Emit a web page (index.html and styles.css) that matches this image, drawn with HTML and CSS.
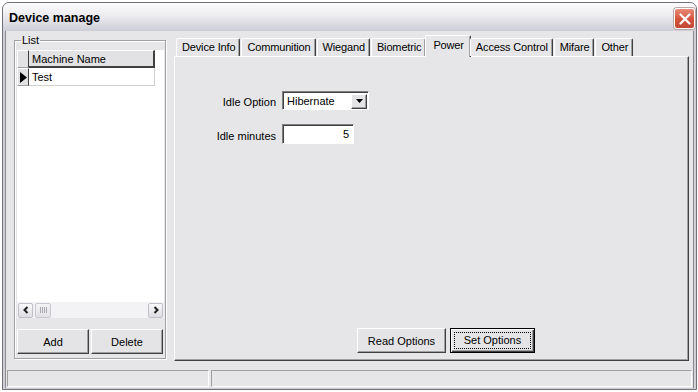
FILE: index.html
```html
<!DOCTYPE html>
<html lang="en">
<head>
    <meta charset="UTF-8">
    <title>Device manage</title>
    <link rel="stylesheet" href="styles.css">
</head>
<body>
    <div class="window">
        <!-- Title bar -->
        <div class="titlebar">
            <span class="title">Device manage</span>
            <span class="close">
                <svg width="12" height="12" viewBox="0 0 12 12">
                    <path d="M1.5 1.5 L10.5 10.5 M10.5 1.5 L1.5 10.5" stroke="#ffffff" stroke-width="2.2" stroke-linecap="round"/>
                </svg>
            </span>
        </div>

        <div class="client">
            <div class="content">
                <!-- Machine list -->
                <fieldset class="group">
                    <legend>List</legend>
                    <div class="grid">
                        <div class="grid-row head">
                            <div class="row-head"></div>
                            <div class="cell">Machine Name</div>
                        </div>
                        <div class="grid-row">
                            <div class="row-head">
                                <svg width="7" height="11" viewBox="0 0 7 11"><path d="M0 0 L7 5.5 L0 11 Z" fill="#000"/></svg>
                            </div>
                            <div class="cell">Test</div>
                        </div>
                        <div class="grid-fill"></div>
                        <div class="hscroll">
                            <span class="scroll-btn">
                                <svg width="8" height="8" viewBox="0 0 8 8"><path d="M5.5 1 L2.5 4 L5.5 7" fill="none" stroke="#202020" stroke-width="2"/></svg>
                            </span>
                            <span class="scroll-thumb">
                                <svg width="7" height="6" viewBox="0 0 7 6"><path d="M0.5 0 V6 M2.5 0 V6 M4.5 0 V6 M6.5 0 V6" stroke="#a8a8b0" stroke-width="1"/></svg>
                            </span>
                            <span class="scroll-track"></span>
                            <span class="scroll-btn">
                                <svg width="8" height="8" viewBox="0 0 8 8"><path d="M2.5 1 L5.5 4 L2.5 7" fill="none" stroke="#202020" stroke-width="2"/></svg>
                            </span>
                        </div>
                    </div>
                    <div class="group-buttons">
                        <button class="btn">Add</button>
                        <button class="btn">Delete</button>
                    </div>
                </fieldset>

                <!-- Options tabs -->
                <div class="tabs">
                    <div class="tab-strip">
                        <span class="tab">Device Info</span>
                        <span class="tab">Communition</span>
                        <span class="tab">Wiegand</span>
                        <span class="tab">Biometric</span>
                        <span class="tab active">Power</span>
                        <span class="tab">Access Control</span>
                        <span class="tab">Mifare</span>
                        <span class="tab">Other</span>
                    </div>
                    <div class="tab-panel">
                        <div class="form">
                            <label>Idle Option</label>
                            <div class="combo">
                                <span class="combo-text">Hibernate</span>
                                <span class="combo-btn">
                                    <svg width="7" height="4" viewBox="0 0 7 4"><path d="M0 0 H7 L3.5 4 Z" fill="#000"/></svg>
                                </span>
                            </div>
                            <label>Idle minutes</label>
                            <div class="edit">5</div>
                        </div>
                        <div class="panel-buttons">
                            <button class="btn read">Read Options</button>
                            <button class="btn set"><span class="focus">Set Options</span></button>
                        </div>
                    </div>
                </div>
            </div>

            <!-- Status bar -->
            <div class="statusbar">
                <div class="status-cell first"></div>
                <div class="status-cell"></div>
            </div>
        </div>
    </div>
</body>
</html>
```

FILE: styles.css
```css
body {
    margin: 0;
    padding: 2px 0 0 2px;
    background-color: #ffffff;
    font-family: "Liberation Sans", Arial, sans-serif;
    font-size: 11px;
    color: #000000;
}

.window {
    width: 695px;
    height: 388px;
    box-sizing: border-box;
    border: 1px solid #707078;
    border-radius: 7px 7px 0 0;
    background-color: #cfcfd6;
    display: flex;
    flex-direction: column;
    overflow: hidden;
}

/* Title bar */
.titlebar {
    height: 28px;
    flex-shrink: 0;
    display: flex;
    align-items: center;
    justify-content: space-between;
    padding: 0 1px 0 6px;
    background: linear-gradient(#fbfbfc, #ececf0 45%, #cdcdd6);
}

.title {
    font-weight: bold;
    font-size: 12.5px;
    margin-top: 2px;
}

.close {
    width: 21px;
    height: 21px;
    margin-top: 3px;
    box-sizing: border-box;
    border: 1px solid #ffffff;
    border-radius: 3px;
    background: linear-gradient(#e88a78, #d4533c 55%, #c44a36);
    display: flex;
    align-items: center;
    justify-content: center;
    box-shadow: 0 0 0 1px #b8a8a8;
}

/* Client area */
.client {
    flex: 1;
    margin: 0 2px 1px 2px;
    background-color: #e6e6e8;
    border-left: 1px solid #8a8a90;
    border-right: 1px solid #8a8a90;
    display: flex;
    flex-direction: column;
}

.content {
    flex: 1;
    display: flex;
    align-items: flex-start;
    gap: 8px;
    padding: 3px 0 0 8px;
}

/* Group box */
.group {
    width: 152px;
    height: 325px;
    box-sizing: border-box;
    margin: 0;
    padding: 0 1px 0 2px;
    border: 1px solid #a0a0a4;
    box-shadow: inset 1px 1px #ffffff, 1px 1px #ffffff;
    display: flex;
    flex-direction: column;
}

.group legend {
    padding: 0 1px;
    margin-left: 4px;
    line-height: 13px;
}

.grid {
    margin-top: 3px;
    height: 268px;
    background-color: #ffffff;
    display: flex;
    flex-direction: column;
}

.grid-row {
    display: flex;
    height: 18px;
}

.row-head {
    width: 12px;
    box-sizing: border-box;
    background-color: #e2e2e4;
    border-top: 1px solid #ffffff;
    border-left: 1px solid #ffffff;
    border-right: 1px solid #404040;
    border-bottom: 1px solid #a0a0a0;
    display: flex;
    align-items: center;
    padding-left: 2px;
}

.cell {
    width: 126px;
    box-sizing: border-box;
    padding-left: 3px;
    display: flex;
    align-items: center;
    border-right: 1px solid #d0d0d0;
    border-bottom: 1px solid #d0d0d0;
}

.head .cell {
    background-color: #e2e2e4;
    border-top: 1px solid #ffffff;
    border-right: 2px solid #404040;
    border-bottom: 2px solid #404040;
}

.grid-fill {
    flex: 1;
}

.hscroll {
    height: 16px;
    display: flex;
    align-items: center;
    gap: 1px;
    padding: 0 1px;
    background-color: #f3f3f5;
}

.scroll-btn {
    width: 15px;
    height: 15px;
    box-sizing: border-box;
    border: 1px solid #c0c0c8;
    border-radius: 2px;
    background: linear-gradient(#fafafc, #dcdce2);
    display: flex;
    align-items: center;
    justify-content: center;
}

.scroll-thumb {
    width: 16px;
    height: 15px;
    margin-left: 1px;
    box-sizing: border-box;
    border: 1px solid #c8c8d0;
    border-radius: 2px;
    background: linear-gradient(#f4f4f6, #e2e2e6);
    display: flex;
    align-items: center;
    justify-content: center;
}

.scroll-track {
    flex: 1;
}

.group-buttons {
    display: flex;
    gap: 2px;
    margin-top: 11px;
}

/* Buttons */
.btn {
    font-family: inherit;
    font-size: 11px;
    color: #000000;
    height: 25px;
    box-sizing: border-box;
    padding: 0;
    background-color: #e4e4e6;
    border: 1px solid;
    border-color: #ffffff #404040 #404040 #ffffff;
    box-shadow: inset -1px -1px #a0a0a0;
}

.group-buttons .btn {
    width: 72px;
}

/* Tabs */
.tabs {
    width: 515px;
    margin-top: 1px;
    display: flex;
    flex-direction: column;
}

.tab-strip {
    height: 21px;
    display: flex;
    align-items: flex-end;
    padding-left: 2px;
    position: relative;
    z-index: 1;
    letter-spacing: -0.15px;
}

.tab {
    height: 18px;
    box-sizing: border-box;
    padding: 0 4px 0 5px;
    margin-right: 1px;
    line-height: 17px;
    background-color: #e6e6e8;
    border: 1px solid;
    border-bottom: none;
    border-color: #ffffff #404040 transparent #ffffff;
    border-radius: 2px 2px 0 0;
    box-shadow: inset -1px 0 #a0a0a0;
}

.tab.active {
    height: 22px;
    margin: 0 -1px -1px -2px;
    padding: 0 6px 0 7px;
    line-height: 18px;
}

.tab.active + .tab {
    margin-left: 0;
}

.tab-panel {
    height: 305px;
    box-sizing: border-box;
    border: 1px solid;
    border-color: #ffffff #404040 #404040 #ffffff;
    box-shadow: inset -1px -1px #a0a0a0;
    display: flex;
    flex-direction: column;
}

.form {
    display: grid;
    grid-template-columns: 80px auto;
    column-gap: 6px;
    row-gap: 14px;
    align-items: center;
    justify-items: start;
    padding: 34px 0 0 21px;
}

.form label {
    justify-self: end;
    margin-top: 3px;
}

.combo {
    width: 87px;
    height: 19px;
    box-sizing: border-box;
    background-color: #ffffff;
    border: 1px solid;
    border-color: #808080 #ffffff #ffffff #808080;
    box-shadow: inset 1px 1px #404040;
    display: flex;
    align-items: center;
    justify-content: space-between;
    padding: 1px 1px 0 4px;
}

.combo-btn {
    width: 16px;
    height: 15px;
    box-sizing: border-box;
    background-color: #e4e4e6;
    border: 1px solid;
    border-color: #ffffff #404040 #404040 #ffffff;
    box-shadow: inset -1px -1px #a0a0a0;
    display: flex;
    align-items: center;
    justify-content: center;
}

.edit {
    width: 72px;
    height: 20px;
    box-sizing: border-box;
    background-color: #ffffff;
    border: 1px solid;
    border-color: #808080 #ffffff #ffffff #808080;
    box-shadow: inset 1px 1px #404040;
    text-align: right;
    padding: 3px 4px 0 0;
}

.panel-buttons {
    margin-top: auto;
    display: flex;
    gap: 4px;
    padding: 0 0 7px 182px;
}

.btn.read {
    width: 89px;
}

.btn.set {
    width: 85px;
    border: 1px solid #000000;
    box-shadow: inset 1px 1px #ffffff, inset -1px -1px #404040, inset -2px -2px #a0a0a0;
    padding: 3px;
}

.focus {
    display: block;
    height: 100%;
    box-sizing: border-box;
    border: 1px dotted #000000;
    line-height: 15px;
}

/* Status bar */
.statusbar {
    height: 17px;
    display: flex;
    gap: 2px;
    padding: 0 1px;
    margin: 2px 0 1px;
}

.status-cell {
    flex: 1;
    border: 1px solid;
    border-color: #a0a0a4 #ffffff #ffffff #a0a0a4;
}

.status-cell.first {
    flex: none;
    width: 200px;
}
```
